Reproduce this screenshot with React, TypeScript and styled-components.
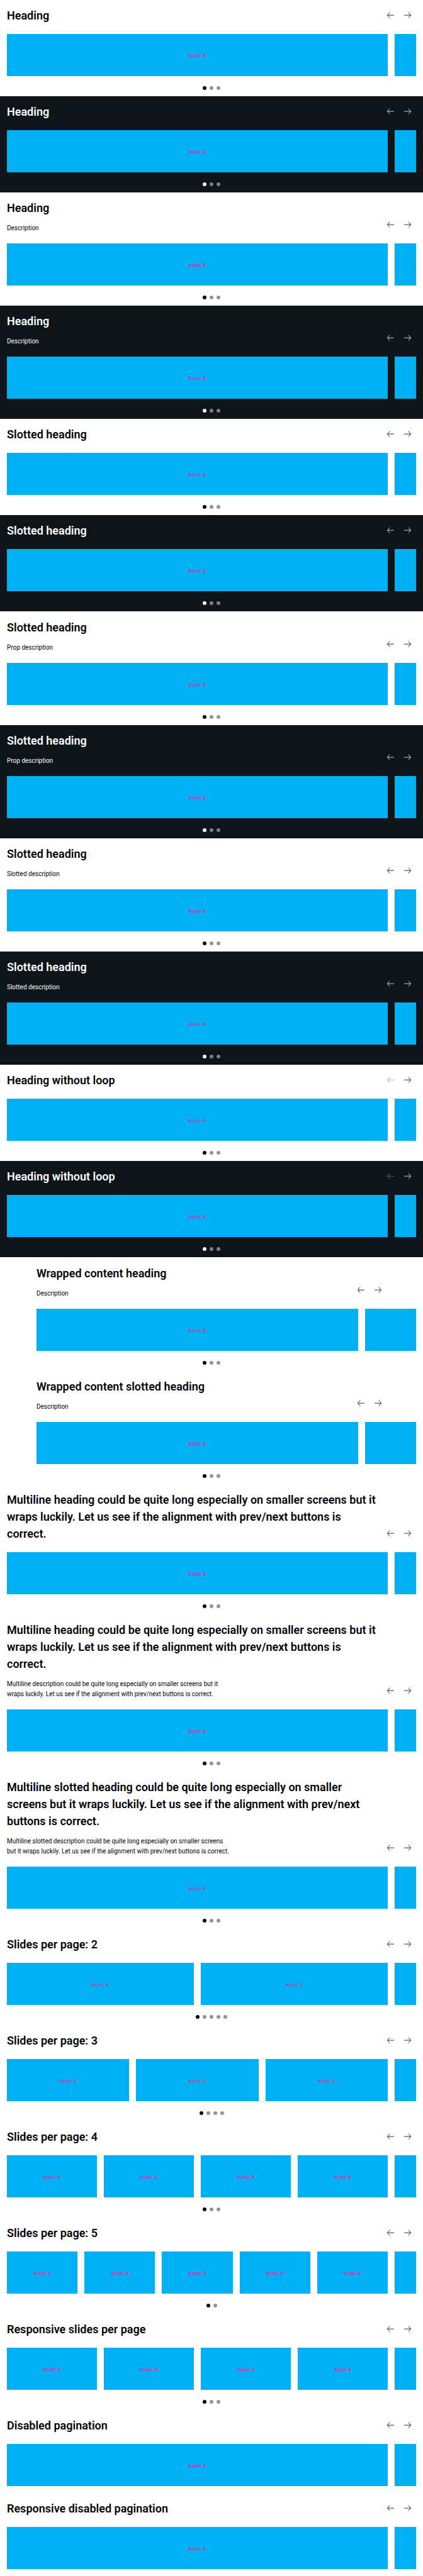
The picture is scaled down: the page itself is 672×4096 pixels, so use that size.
import React from "react";
import styled, { createGlobalStyle, ThemeProvider } from "styled-components";

type Tone = "light" | "dark";

const tones = {
  light: { background: "#ffffff", ink: "#010205", muted: "#949598" },
  dark: { background: "#0e1418", ink: "#fbfcff", muted: "#7c7f85" },
};

const Global = createGlobalStyle`
  body {
    margin: 0;
    background: #ffffff;
    font-family: Roboto, "Liberation Sans", sans-serif;
  }
`;

const Page = styled.main`
  display: flex;
  flex-direction: column;
`;

const Group = styled.div`
  margin-bottom: 1px;
`;

const Carousel = styled.section`
  padding: 11px 0;
  background: ${(p) => p.theme.background};
  color: ${(p) => p.theme.ink};
`;

const Header = styled.header<{ $inset: boolean }>`
  display: flex;
  align-items: flex-end;
  justify-content: space-between;
  padding: 0 ${(p) => (p.$inset ? 58 : 11)}px;
`;

const Copy = styled.div`
  flex: 1;
  min-width: 0;
`;

const Heading = styled.h2`
  max-width: 590px;
  margin: 0;
  font-size: 18px;
  font-weight: 600;
  line-height: 27px;
`;

const Description = styled.p`
  max-width: 357px;
  margin: 11px 0 0;
  font-size: 10px;
  line-height: 16px;
`;

const Controls = styled.div`
  display: flex;
`;

const ArrowButton = styled.button`
  width: 27px;
  height: 27px;
  padding: 0;
  border: 0;
  background: none;
  color: ${(p) => p.theme.ink};
  cursor: pointer;

  &:disabled {
    color: ${(p) => p.theme.muted};
    cursor: default;
  }

  svg {
    display: block;
    width: 100%;
    height: 100%;
    fill: none;
    stroke: currentColor;
    stroke-width: 1.2;
  }
`;

const Track = styled.div<{ $inset: boolean }>`
  display: flex;
  gap: 11px;
  margin-top: 16px;
  padding: 0 11px 0 ${(p) => (p.$inset ? 58 : 11)}px;
`;

const Slide = styled.div`
  display: flex;
  flex: 1 1 0;
  align-items: center;
  justify-content: center;
  height: 67px;
  background: #00b0f4;
  color: #ff1493;
  font: italic small-caps 700 8px "DejaVu Serif Condensed", "DejaVu Serif", serif;
`;

const NextSlide = styled(Slide)<{ $inset: boolean }>`
  flex: none;
  width: ${(p) => (p.$inset ? 81 : 34)}px;
`;

const Pagination = styled.div`
  display: flex;
  justify-content: center;
  gap: 5px;
  height: 5px;
  margin-top: 16px;
`;

const Bullet = styled.span<{ $active: boolean }>`
  width: 6px;
  height: 6px;
  border-radius: 50%;
  background: ${(p) => (p.$active ? p.theme.ink : p.theme.muted)};
`;

interface Story {
  heading: string;
  description?: string;
  tone?: Tone;
  slides?: number;
  pages?: number;
  inset?: boolean;
  loop?: boolean;
}

function CarouselStory({
  heading,
  description,
  tone = "light",
  slides = 1,
  pages = 3,
  inset = false,
  loop = true,
}: Story) {
  return (
    <ThemeProvider theme={tones[tone]}>
      <Carousel aria-label={heading}>
        <Header $inset={inset}>
          <Copy>
            <Heading>{heading}</Heading>
            {description && <Description>{description}</Description>}
          </Copy>
          <Controls>
            <ArrowButton type="button" aria-label="Previous slide" disabled={!loop}>
              <svg viewBox="0 0 40 40" aria-hidden="true">
                <path d="M28 19.5H12.5M18 13l-5.5 6.5L18 26" />
              </svg>
            </ArrowButton>
            <ArrowButton type="button" aria-label="Next slide">
              <svg viewBox="0 0 40 40" aria-hidden="true">
                <path d="M12 19.5h15.5M22 13l5.5 6.5L22 26" />
              </svg>
            </ArrowButton>
          </Controls>
        </Header>
        <Track $inset={inset}>
          {Array.from({ length: slides }, (_, i) => (
            <Slide key={i}>Slide {i + 1}</Slide>
          ))}
          <NextSlide $inset={inset} />
        </Track>
        {pages > 0 && (
          <Pagination>
            {Array.from({ length: pages }, (_, i) => (
              <Bullet key={i} $active={i === 0} />
            ))}
          </Pagination>
        )}
      </Carousel>
    </ThemeProvider>
  );
}

const inBothTones = (stories: Story[]): Story[] =>
  stories.flatMap((story) => [
    { ...story, tone: "light" as const },
    { ...story, tone: "dark" as const },
  ]);

const groups: Story[][] = [
  inBothTones([
    { heading: "Heading" },
    { heading: "Heading", description: "Description" },
    { heading: "Slotted heading" },
  ]),
  inBothTones([
    { heading: "Slotted heading", description: "Prop description" },
    { heading: "Slotted heading", description: "Slotted description" },
    { heading: "Heading without loop", loop: false },
  ]),
  [
    { heading: "Wrapped content heading", description: "Description", inset: true },
    { heading: "Wrapped content slotted heading", description: "Description", inset: true },
    {
      heading:
        "Multiline heading could be quite long especially on smaller screens but it wraps luckily. Let us see if the alignment with prev/next buttons is correct.",
    },
    {
      heading:
        "Multiline heading could be quite long especially on smaller screens but it wraps luckily. Let us see if the alignment with prev/next buttons is correct.",
      description:
        "Multiline description could be quite long especially on smaller screens but it wraps luckily. Let us see if the alignment with prev/next buttons is correct.",
    },
    {
      heading:
        "Multiline slotted heading could be quite long especially on smaller screens but it wraps luckily. Let us see if the alignment with prev/next buttons is correct.",
      description:
        "Multiline slotted description could be quite long especially on smaller screens but it wraps luckily. Let us see if the alignment with prev/next buttons is correct.",
    },
    { heading: "Slides per page: 2", slides: 2, pages: 5 },
    { heading: "Slides per page: 3", slides: 3, pages: 4 },
    { heading: "Slides per page: 4", slides: 4 },
    { heading: "Slides per page: 5", slides: 5, pages: 2 },
    { heading: "Responsive slides per page", slides: 4 },
    { heading: "Disabled pagination", pages: 0 },
    { heading: "Responsive disabled pagination", pages: 0 },
  ],
];

export default function App() {
  return (
    <>
      <Global />
      <Page>
        {groups.map((stories, g) => (
          <Group key={g}>
            {stories.map((story, i) => (
              <CarouselStory key={i} {...story} />
            ))}
          </Group>
        ))}
      </Page>
    </>
  );
}
